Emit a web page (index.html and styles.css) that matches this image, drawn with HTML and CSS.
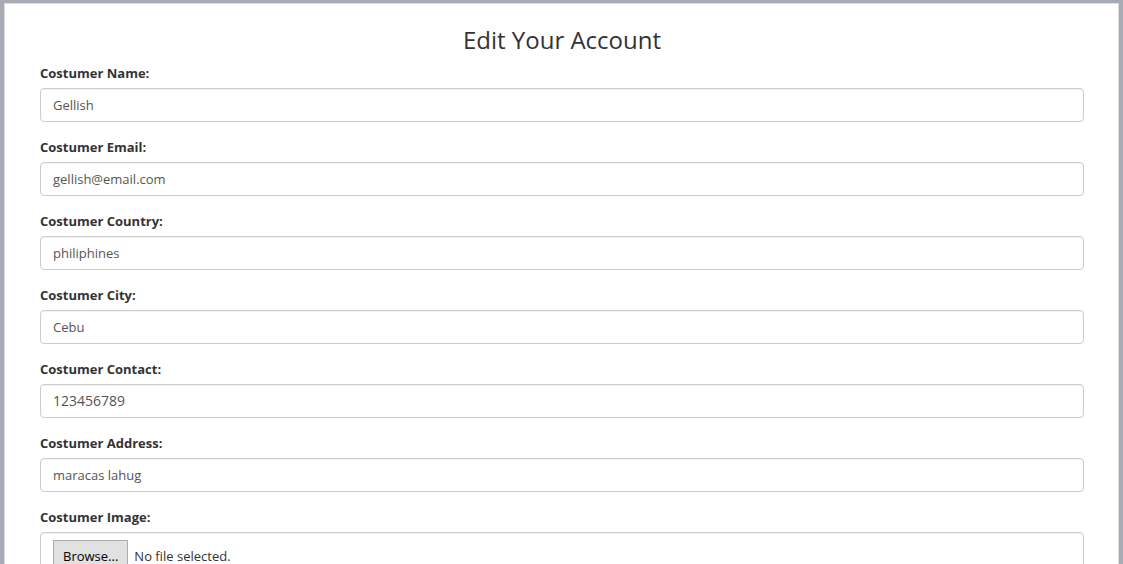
FILE: index.html
```html
<!DOCTYPE html>
<html>
<head>
<meta charset="utf-8">
<link rel="stylesheet" href="styles.css">
</head>
<body>
<div class="card">
  <h1 class="title">Edit Your Account</h1>
  <form class="form">
    <div class="group">
      <label class="label">Costumer Name:</label>
      <div class="control">Gellish</div>
    </div>
    <div class="group">
      <label class="label">Costumer Email:</label>
      <div class="control">gellish@email.com</div>
    </div>
    <div class="group">
      <label class="label">Costumer Country:</label>
      <div class="control">philiphines</div>
    </div>
    <div class="group">
      <label class="label">Costumer City:</label>
      <div class="control">Cebu</div>
    </div>
    <div class="group">
      <label class="label">Costumer Contact:</label>
      <div class="control number">123456789</div>
    </div>
    <div class="group">
      <label class="label">Costumer Address:</label>
      <div class="control">maracas lahug</div>
    </div>
    <div class="group">
      <label class="label">Costumer Image:</label>
      <div class="control file">
        <span class="browse">Browse...</span>
        <span class="nofile">No file selected.</span>
      </div>
    </div>
  </form>
</div>
</body>
</html>
```

FILE: styles.css
```css
html, body {
  margin: 0;
  padding: 0;
}
body {
  background: #a7abb3;
  font-family: "Open Sans", "Noto Sans", sans-serif;
  height: 564px;
  overflow: hidden;
}
.card {
  margin: 3px 4px 0 4px;
  background: #fff;
  border: 1px solid #dcdcdc;
  border-bottom: none;
  padding: 0 34px 0 35px;
  height: 600px;
}
.title {
  margin: 0;
  padding-top: 21px;
  font-size: 24px;
  font-weight: 400;
  line-height: 30px;
  text-align: center;
  color: #333;
}
.form {
  margin-top: 9px;
}
.group {
  margin-bottom: 16px;
}
.label {
  display: block;
  font-size: 13px;
  font-weight: 700;
  color: #333;
  line-height: 18px;
  margin-bottom: 6px;
}
.control {
  box-sizing: border-box;
  height: 34px;
  border: 1px solid #ccc;
  border-radius: 4px;
  padding: 0 12px;
  font-size: 13px;
  color: #555;
  line-height: 32px;
  box-shadow: inset 0 1px 1px rgba(0,0,0,.05);
}
.control.number {
  font-size: 14px;
}
.control.file {
  display: flex;
  align-items: flex-start;
  gap: 6px;
  padding-top: 7px;
  height: 60px;
}
.browse {
  box-sizing: border-box;
  background: #e1e1e1;
  border: 1px solid #adadad;
  color: #000;
  font-size: 13px;
  line-height: 30px;
  padding: 0 9px;
  height: 32px;
}
.nofile {
  color: #333;
  line-height: 32px;
}
```
